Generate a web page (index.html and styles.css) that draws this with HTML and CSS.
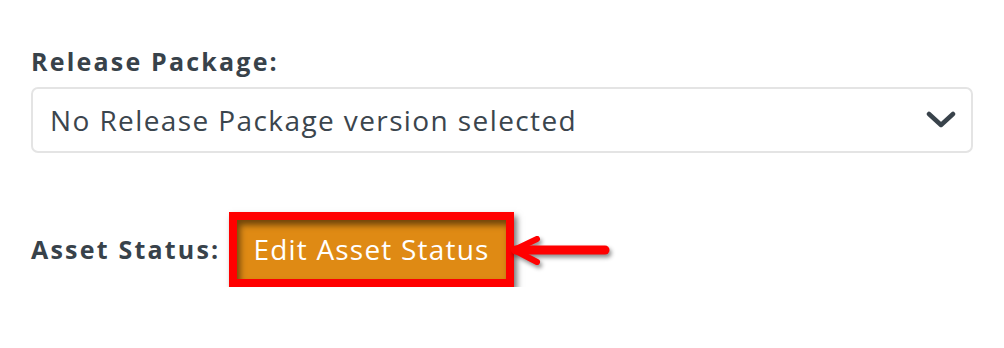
FILE: index.html
```html
<!DOCTYPE html>
<html lang="en">
<head>
  <meta charset="UTF-8" />
  <meta name="viewport" content="width=device-width, initial-scale=1.0" />
  <title>Release Package</title>
  <link rel="stylesheet" href="styles.css">
</head>
<body>
  <div class="form">
    <div class="field-label">Release Package:</div>
    <div class="select-box">
      <span class="select-text">No Release Package version selected</span>
      <svg class="chevron" width="30" height="18" viewBox="0 0 30 18">
        <path d="M3 3 L15 14 L27 3" fill="none" stroke="#39434b" stroke-width="4.5" stroke-linecap="round" stroke-linejoin="round" />
      </svg>
    </div>

    <div class="status-row">
      <div class="field-label">Asset Status:</div>
      <div class="highlight">
        <div class="status-btn">Edit Asset Status</div>
      </div>
      <!-- callout arrow -->
      <svg class="arrow" width="104" height="40" viewBox="0 0 104 40">
        <g fill="none" stroke="#ff0000" stroke-linecap="round" stroke-linejoin="round">
          <path d="M6 20 L95 20" stroke-width="9" />
          <path d="M27 9 L4 20 L27 32" stroke-width="6" />
        </g>
      </svg>
    </div>
  </div>
</body>
</html>
```

FILE: styles.css
```css
body {
  margin: 0;
  background: #ffffff;
  font-family: 'Open Sans', Lato, sans-serif;
  color: #39434b;
}
.form {
  padding: 47px 31px 0 31px;
}
.field-label {
  font-size: 25px;
  font-weight: 700;
  line-height: 28px;
  letter-spacing: 2.2px;
  color: #38424a;
}
.select-box {
  margin-top: 12px;
  height: 66px;
  box-sizing: border-box;
  border: 2px solid #e4e4e4;
  border-radius: 7px;
  display: flex;
  align-items: center;
  justify-content: space-between;
  padding: 0 15px 0 17px;
}
.select-text {
  font-size: 28px;
  letter-spacing: 1.4px;
  color: #3b454d;
}
.chevron {
  display: block;
}
.status-row {
  margin-top: 59px;
  display: flex;
  align-items: center;
}
.status-row .field-label {
  margin-right: 9px;
  margin-top: -2px;
}
.highlight {
  border: 8px solid #ff0000;
  box-shadow: 3px 4px 6px rgba(0, 0, 0, 0.55);
}
.status-btn {
  background: #df8a14;
  color: #ffffff;
  font-size: 28px;
  letter-spacing: 1.2px;
  height: 59px;
  line-height: 59px;
  padding: 0 16px;
  box-shadow: inset 3px 5px 6px rgba(0, 0, 0, 0.5);
}
.arrow {
  display: block;
  margin-left: -4px;
  filter: drop-shadow(2px 3px 2px rgba(0, 0, 0, 0.45));
}
```
